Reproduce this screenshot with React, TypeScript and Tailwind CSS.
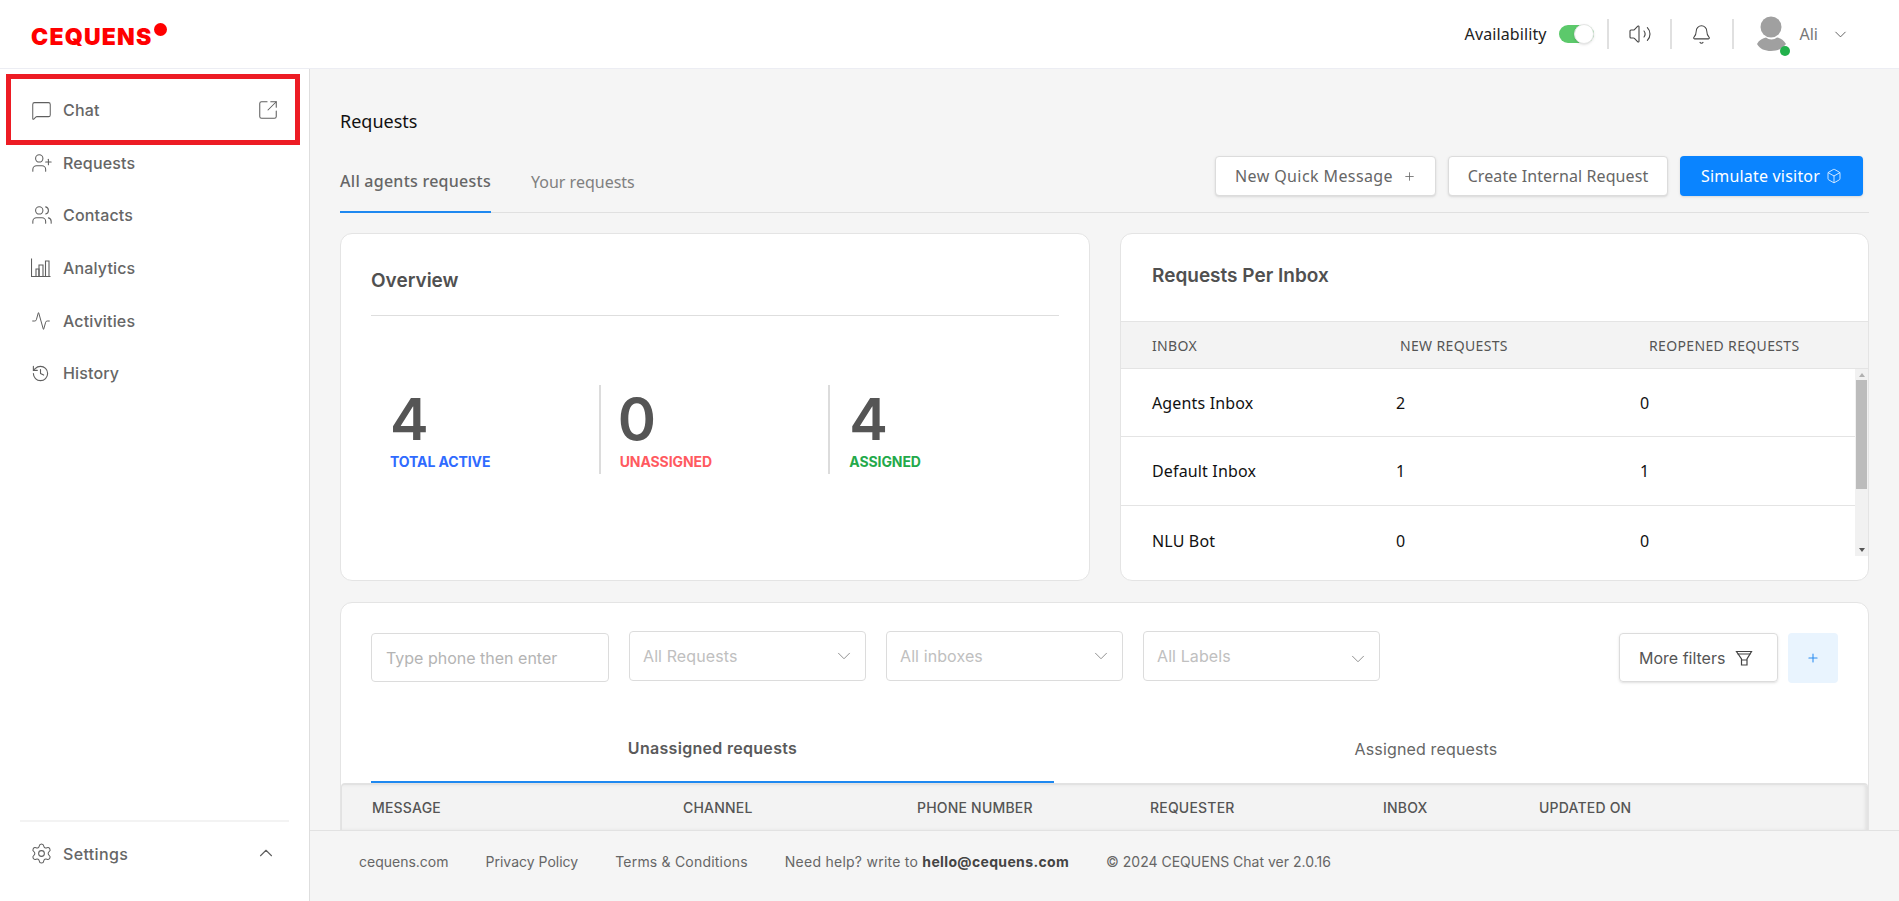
import { Activity, Bell, Box, ChevronDown, ChevronUp, History, MessageSquare, Plus, Settings, SquareArrowOutUpRight, UserPlus, Users, Volume2 } from "lucide-react";
import type { ReactNode } from "react";

const AnalyticsIcon = () => (
  <svg width="20" height="20" viewBox="0 0 20 20" fill="none" stroke="currentColor" strokeWidth="1.1">
    <path d="M0.5 0.5V18.5H19.5" />
    <path d="M5 18.5V11H8V18.5" />
    <path d="M8 18.5V7H12V18.5" />
    <path d="M14.5 18.5V3H18V18.5" />
  </svg>
);

const FilterIcon = () => (
  <svg width="18" height="18" viewBox="0 0 18 18" fill="none" stroke="currentColor" strokeWidth="1.2">
    <path d="M1.5 2.5H16.5L12 10V16H6.5V10L1.5 2.5Z" />
    <path d="M6.5 11H12" />
    <path d="M2.5 5H15.5" />
  </svg>
);

const Avatar = () => (
  <svg width="36" height="36" viewBox="0 0 36 36">
    <circle cx="18" cy="11" r="10.5" fill="#a0a0a0" />
    <path d="M4 28C6 24 10 22 13 21.5C16 24 21 24 24 21.5C27 22 31 24 33 28C29 33 24 35 18 35C12 35 7 33 4 28Z" fill="#a0a0a0" />
  </svg>
);

const navItems: { label: string; icon: ReactNode }[] = [
  { label: "Chat", icon: <MessageSquare size={21} strokeWidth={1.15} /> },
  { label: "Requests", icon: <UserPlus size={22} strokeWidth={1.15} /> },
  { label: "Contacts", icon: <Users size={22} strokeWidth={1.15} /> },
  { label: "Analytics", icon: <AnalyticsIcon /> },
  { label: "Activities", icon: <Activity size={20} strokeWidth={1.2} /> },
  { label: "History", icon: <History size={19} strokeWidth={1.4} /> },
];

const inboxRows = [
  { name: "Agents Inbox", fresh: "2", reopened: "0", height: "h-[68px]" },
  { name: "Default Inbox", fresh: "1", reopened: "1", height: "h-[69px]" },
  { name: "NLU Bot", fresh: "0", reopened: "0", height: "h-[69px]" },
];

const stats = [
  { value: "4", label: "TOTAL ACTIVE", color: "text-[#2f6bff]", box: "w-[228px] pl-[19px]", digit: "" },
  { value: "0", label: "UNASSIGNED", color: "text-[#ff5a5f]", box: "w-[230px] border-l-2 border-[#dcdcdc] pl-[19px]", digit: "ml-[-2px]" },
  { value: "4", label: "ASSIGNED", color: "text-[#23a94a]", box: "w-[231px] border-l-2 border-[#dcdcdc] pl-[19px]", digit: "" },
];

const selects = [
  { label: "All Requests", chevron: "" },
  { label: "All inboxes", chevron: "" },
  { label: "All Labels", chevron: "mt-[6px]" },
];

const Sidebar = () => (
  <aside className="relative flex w-[310px] shrink-0 flex-col border-r border-[#dedede] bg-white font-['Inter',sans-serif] text-[#666]">
    <nav className="flex flex-col pt-[15px]">
      {navItems.map((item) => (
        <div key={item.label} className="flex h-[52.6px] items-center pl-[31px] pr-[30px]">
          <span className="flex w-[32px] items-center text-[#5f5f5f]">{item.icon}</span>
          <span className="text-[16px] font-medium tracking-[0.15px]">{item.label}</span>
          {item.label === "Chat" && <SquareArrowOutUpRight size={22} strokeWidth={1.15} className="ml-auto text-[#5f5f5f]" />}
        </div>
      ))}
    </nav>
    {/* highlight drawn on top of the screenshot */}
    <div className="absolute left-[6px] top-[5px] h-[71px] w-[294px] border-[5px] border-[#ed1c24]" />
    <div className="mx-[20px] mt-auto border-t-2 border-[#f3f3f3]" />
    <div className="flex h-[79px] items-start pl-[30px] pr-[32px] pt-[20px]">
      <Settings size={23} strokeWidth={1.1} className="mr-[10px] text-[#5f5f5f]" />
      <span className="text-[16px] font-medium tracking-[0.35px]">Settings</span>
      <ChevronUp size={22} strokeWidth={1.2} className="ml-auto text-[#5f5f5f]" />
    </div>
  </aside>
);

const Header = () => (
  <header className="flex h-[69px] shrink-0 items-center border-b border-[#ecedf3] bg-white pl-[31px] pr-[49px]">
    <div className="mt-[5px] flex items-start font-['Inter',sans-serif] text-[red]">
      <span className="text-[23px] font-black leading-[24px] tracking-[1.2px]">CEQUENS</span>
      <span className="ml-[1px] mt-[-2px] h-[13px] w-[13px] rounded-full bg-[red]" />
    </div>
    <div className="ml-auto flex items-center font-['Noto_Sans',sans-serif]">
      <span className="text-[16px] tracking-[0.1px] text-[#222]">Availability</span>
      <span className="relative ml-[12px] h-[18px] w-[35px] rounded-full bg-[#5cc96b]">
        <span className="absolute right-0 top-[-1px] h-[20px] w-[20px] rounded-full border border-[#e6e6e6] bg-white shadow-sm" />
      </span>
      <span className="ml-[13px] h-[30px] w-[2px] bg-[#e0e0e0]" />
      <Volume2 size={24} strokeWidth={1.1} className="ml-[19px] text-[#444]" />
      <span className="ml-[18px] h-[30px] w-[2px] bg-[#e0e0e0]" />
      <Bell size={21} strokeWidth={1.15} className="ml-[19px] text-[#444]" />
      <span className="ml-[20px] h-[30px] w-[2px] bg-[#e0e0e0]" />
      <span className="relative ml-[19px] h-[36px] w-[36px]">
        <Avatar />
        <span className="absolute right-[-1px] top-[30px] h-[10px] w-[10px] rounded-full bg-[#22b14c]" />
      </span>
      <span className="ml-[11px] text-[16px] text-[#777]">Ali</span>
      <ChevronDown size={19} strokeWidth={1.15} className="ml-[13px] text-[#555]" />
    </div>
  </header>
);

const Overview = () => (
  <section className="h-[348px] w-[750px] rounded-[12px] border border-[#e4e4e4] bg-white px-[30px] pt-[33px]">
    <h2 className="h-[28px] font-['Inter',sans-serif] text-[19px] font-semibold leading-[28px] text-[#505050]">Overview</h2>
    <div className="mt-[20px] border-t border-[#dedede]" />
    <div className="mt-[69px] flex h-[89px]">
      {stats.map((stat) => (
        <div key={stat.label} className={stat.box}>
          <div className={`mt-[6px] font-['Inter',sans-serif] text-[58px] font-semibold leading-[56px] text-[#555] ${stat.digit}`}>{stat.value}</div>
          <div className={`mt-[5px] font-['Inter',sans-serif] text-[14px] font-bold leading-[20px] tracking-[-0.1px] ${stat.color}`}>{stat.label}</div>
        </div>
      ))}
    </div>
  </section>
);

const RequestsPerInbox = () => (
  <section className="h-[348px] w-[749px] overflow-hidden rounded-[12px] border border-[#e4e4e4] bg-white">
    <h2 className="h-[87px] pl-[31px] pt-[28px] font-['Inter',sans-serif] text-[19px] font-semibold leading-[28px] text-[#505050]">Requests Per Inbox</h2>
    <div className="flex h-[48px] items-center border-y border-[#e4e4e4] bg-[#f3f3f3] pl-[31px] text-[14px] tracking-[0.35px] text-[#555]">
      <span className="w-[248px]">INBOX</span>
      <span className="w-[249px]">NEW REQUESTS</span>
      <span>REOPENED REQUESTS</span>
    </div>
    <div className="flex h-[187px]">
      <div className="flex-1">
        {inboxRows.map((row, index) => (
          <div key={row.name} className={`flex items-center pl-[31px] text-[16px] tracking-[0.15px] text-[#111] ${row.height} ${index < 2 ? "border-b border-[#e4e4e4]" : ""}`}>
            <span className="w-[244px]">{row.name}</span>
            <span className="w-[244px]">{row.fresh}</span>
            <span>{row.reopened}</span>
          </div>
        ))}
      </div>
      {/* scrollbar */}
      <div className="flex w-[13px] flex-col items-center bg-[#f1f1f1] py-[4px]">
        <span className="h-0 w-0 border-x-[3px] border-b-[4px] border-x-transparent border-b-[#b0b0b0]" />
        <span className="mt-[3px] h-[109px] w-[11px] bg-[#bcbcbc]" />
        <span className="mt-auto h-0 w-0 border-x-[3px] border-t-[4px] border-x-transparent border-t-[#555]" />
      </div>
    </div>
  </section>
);

const RequestsTable = () => (
  <section className="mt-[21px] h-[260px] shrink-0 overflow-hidden rounded-t-[12px] border border-[#e4e4e4] bg-white font-['Inter',sans-serif]">
    <div className="flex items-start pl-[30px] pr-[30px] pt-[28px]">
      <div className="mt-[2px] flex h-[49px] w-[238px] items-center rounded-[4px] border border-[#dcdcdc] pl-[14px] text-[16px] text-[#b4b4b4]">Type phone then enter</div>
      {selects.map((select) => (
        <div key={select.label} className="ml-[20px] flex h-[50px] w-[237px] items-center rounded-[4px] border border-[#dcdcdc] pl-[13px] pr-[10px] text-[16px] tracking-[0.1px] text-[#c0c0c0]">
          <span>{select.label}</span>
          <ChevronDown size={22} strokeWidth={1} className={`ml-auto text-[#888] ${select.chevron}`} />
        </div>
      ))}
      <div className="ml-auto mt-[2px] flex h-[49px] w-[159px] items-center rounded-[4px] border border-[#dcdcdc] pl-[19px] text-[16px] text-[#555] shadow-sm">
        More filters
        <span className="ml-[10px] flex text-[#444]"><FilterIcon /></span>
      </div>
      <div className="ml-[10px] mt-[2px] flex h-[50px] w-[50px] items-center justify-center rounded-[4px] bg-[#e9f4fe] text-[#2a8cf0]">
        <Plus size={14} strokeWidth={1.8} />
      </div>
    </div>
    <div className="mt-[27px] flex pl-[30px]">
      <div className="flex h-[73px] w-[683px] items-center justify-center pt-[3px] text-[16px] font-semibold tracking-[0.3px] text-[#5a5a5a]">Unassigned requests</div>
      <div className="flex h-[73px] w-[744px] items-center justify-center pt-[5px] text-[16px] tracking-[0.15px] text-[#666]">Assigned requests</div>
    </div>
    <div className="relative">
      <div className="absolute left-[30px] top-[-2px] h-[2px] w-[683px] bg-[#1e88f0]" />
      <div className="flex h-[47px] items-center rounded-t-[4px] border-l border-t-2 border-[#e2e2e2] bg-[#f3f3f3] text-[14px] font-medium tracking-[0.2px] text-[#555] shadow-[inset_-3px_0_3px_#e2e2e2]">
        <span className="ml-[30px] w-[311px]">MESSAGE</span>
        <span className="w-[234px]">CHANNEL</span>
        <span className="w-[233px]">PHONE NUMBER</span>
        <span className="w-[233px]">REQUESTER</span>
        <span className="w-[156px]">INBOX</span>
        <span>UPDATED ON</span>
      </div>
    </div>
  </section>
);

const App = () => {
  return (
    <div className="flex h-screen w-full flex-col overflow-hidden bg-[#f5f5f5] font-['Noto_Sans',sans-serif]">
      <Header />
      <div className="flex min-h-0 flex-1">
        <Sidebar />
        <div className="flex min-w-0 flex-1 flex-col">
          <main className="min-h-0 flex-1 overflow-hidden pl-[30px] pr-[30px]">
            <h1 className="mt-[39px] h-[26px] text-[18px] leading-[26px] text-[#111]">Requests</h1>
            <div className="flex h-[79px] items-start border-b border-[#e0e0e0] pt-[22px]">
              <div className="flex h-[56px] items-center">
                <div className="flex h-[57px] w-[151px] items-center justify-center border-b-2 border-[#1e88f0] pb-[4px] text-[16px] font-medium tracking-[0.25px] text-[#666]">All agents requests</div>
                <div className="ml-[40px] pb-[4px] text-[16px] text-[#808080]">Your requests</div>
              </div>
              <div className="ml-auto mr-[6px] flex gap-[12px] text-[16px]">
                <button className="flex h-[40px] w-[221px] items-center justify-center gap-[10px] rounded-[4px] border border-[#dcdcdc] bg-white tracking-[0.4px] text-[#666] shadow-sm">
                  New Quick Message <Plus size={13} strokeWidth={1.5} />
                </button>
                <button className="flex h-[40px] w-[220px] items-center justify-center rounded-[4px] border border-[#dcdcdc] bg-white tracking-[0.1px] text-[#666] shadow-sm">
                  Create Internal Request
                </button>
                <button className="flex h-[40px] w-[183px] items-center justify-center gap-[6px] rounded-[4px] bg-[#0a84ff] tracking-[0.2px] text-white shadow-sm">
                  Simulate visitor <Box size={16} strokeWidth={1.2} />
                </button>
              </div>
            </div>
            <div className="mt-[20px] flex gap-[30px]">
              <Overview />
              <RequestsPerInbox />
            </div>
            <RequestsTable />
          </main>
          <footer className="flex h-[71px] shrink-0 items-center gap-[37px] border-t border-[#e2e2e2] pb-[10px] pl-[49px] font-['Inter',sans-serif] text-[14px] text-[#666]">
            <span>cequens.com</span>
            <span>Privacy Policy</span>
            <span className="tracking-[0.2px]">Terms &amp; Conditions</span>
            <span className="tracking-[0.25px]">Need help? write to <b className="font-bold tracking-[0.35px] text-[#444]">hello@cequens.com</b></span>
            <span>© 2024 CEQUENS Chat ver 2.0.16</span>
          </footer>
        </div>
      </div>
    </div>
  );
};

export default App;
